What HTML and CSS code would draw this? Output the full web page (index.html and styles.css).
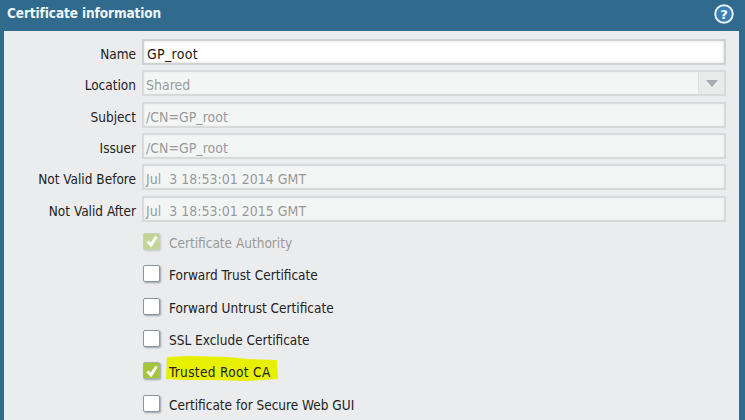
FILE: index.html
```html
<!DOCTYPE html>
<html lang="en">
<head>
<meta charset="utf-8">
<title>Certificate information</title>
<link rel="stylesheet" href="styles.css">
</head>
<body>
<div class="dialog">
  <header class="titlebar">
    <h1 class="title">Certificate information</h1>
    <svg class="help" width="20" height="20" viewBox="0 0 20 20">
      <circle cx="10" cy="10" r="8.8" fill="#3a7fb4" stroke="#e4eff6" stroke-width="2"/>
      <text x="10" y="14.5" text-anchor="middle" class="help-mark">?</text>
    </svg>
  </header>
  <main class="panel">
    <div class="fields">
      <label class="label">Name</label>
      <div class="input editable">GP_root</div>
      <label class="label">Location</label>
      <div class="input select"><span class="select-value">Shared</span><span class="arrow"><span class="tri"></span></span></div>
      <label class="label">Subject</label>
      <div class="input">/CN=GP_root</div>
      <label class="label">Issuer</label>
      <div class="input">/CN=GP_root</div>
      <label class="label">Not Valid Before</label>
      <div class="input pre">Jul  3 18:53:01 2014 GMT</div>
      <label class="label">Not Valid After</label>
      <div class="input pre">Jul  3 18:53:01 2015 GMT</div>
    </div>
    <ul class="checks">
      <li class="check disabled"><span class="box on"><svg width="14" height="14" viewBox="0 0 14 14"><path d="M2.5 7.5 6 11 11.5 2.5" fill="none" stroke="#fff" stroke-width="3"/></svg></span>Certificate Authority</li>
      <li class="check"><span class="box"></span>Forward Trust Certificate</li>
      <li class="check"><span class="box"></span>Forward Untrust Certificate</li>
      <li class="check"><span class="box"></span>SSL Exclude Certificate</li>
      <li class="check marked">
        <svg class="marker" width="113" height="27" viewBox="0 0 113 27"><path d="M1 1 24 0 62 1 82 3 111 4 112 23 80 25 46 24 20 24 0 23Z" fill="#e6f000"/></svg>
        <span class="box on"><svg width="14" height="14" viewBox="0 0 14 14"><path d="M2.5 7.5 6 11 11.5 2.5" fill="none" stroke="#fff" stroke-width="3"/></svg></span><span class="marked-text">Trusted Root CA</span></li>
      <li class="check"><span class="box"></span>Certificate for Secure Web GUI</li>
    </ul>
  </main>
</div>
</body>
</html>
```
FILE: styles.css
```css
html, body { margin: 0; padding: 0; }
body {
  width: 745px;
  height: 420px;
  overflow: hidden;
  font-family: "DejaVu Sans Condensed", "DejaVu Sans", sans-serif;
  font-stretch: condensed;
  font-size: 13.5px;
  color: #222;
}
.dialog {
  height: 420px;
  background: #306a8c;
  padding: 0 6px 0 4px;
  display: flex;
  flex-direction: column;
}
.titlebar {
  height: 34px;
  display: flex;
  align-items: center;
  justify-content: space-between;
  padding: 0 5px 6px 3px;
  box-sizing: border-box;
}
.title {
  margin: 0;
  font-size: 13.5px;
  font-weight: bold;
  letter-spacing: -0.1px;
  color: #eef4f8;
}
.help { margin-top: 2px; }
.help-mark { font: bold 13px "DejaVu Sans", sans-serif; fill: #fff; }
.panel {
  flex: 1;
  background: #ebecee;
  padding: 8px 13px 0 0;
}
.fields {
  display: grid;
  grid-template-columns: 132px 1fr;
  column-gap: 6px;
  row-gap: 5.3px;
  grid-auto-rows: 26px;
  align-items: center;
}
.label { text-align: right; padding-top: 4px; }
.input {
  height: 26px;
  box-sizing: border-box;
  border: 2px solid #d8d9d9;
  background: #f4f6f6;
  color: #9a9a9a;
  padding: 0 2px;
  font-size: 14px;
  line-height: 26px;
  box-shadow: inset 0 0 2px #e4e4e4;
}
.pre { white-space: pre; }
.editable {
  background: #fff;
  color: #1a1a1a;
  border-color: #cfd0d0;
  box-shadow: inset 0 0 3px #d8d8d8;
  padding-left: 3px;
  letter-spacing: 0.3px;
}
.select { display: flex; padding-right: 0; }
.select-value { flex: 1; }
.arrow {
  width: 25px;
  height: 22px;
  background: #e9eaea;
  border-left: 1px solid #dfe0e0;
  display: flex;
  align-items: center;
  justify-content: center;
}
.tri {
  width: 0;
  height: 0;
  border-left: 6px solid transparent;
  border-right: 6px solid transparent;
  border-top: 7px solid #a9adb3;
}
.checks {
  list-style: none;
  margin: 4px 0 0;
  padding: 0 0 0 139px;
}
.check {
  height: 32.4px;
  box-sizing: border-box;
  padding-top: 2px;
  display: flex;
  align-items: center;
  gap: 9px;
  position: relative;
}
.disabled { color: #9a9a9a; }
.box {
  width: 17px;
  height: 17px;
  margin-bottom: 3px;
  box-sizing: border-box;
  background: #fff;
  border: 1px solid #8f979e;
  border-radius: 2px;
  box-shadow: 1px 1px 2px #9aa2a8;
  display: flex;
  align-items: center;
  justify-content: center;
  position: relative;
}
.box.on { background: #a4c639; border-color: #a9b59a; }
.disabled .box.on { background: #c3d596; border-color: #c9d2b8; box-shadow: 1px 1px 2px #c4c8cc; }
.marker { position: absolute; left: 23px; top: 1px; }
.marked-text { position: relative; letter-spacing: 0.35px; }
```
